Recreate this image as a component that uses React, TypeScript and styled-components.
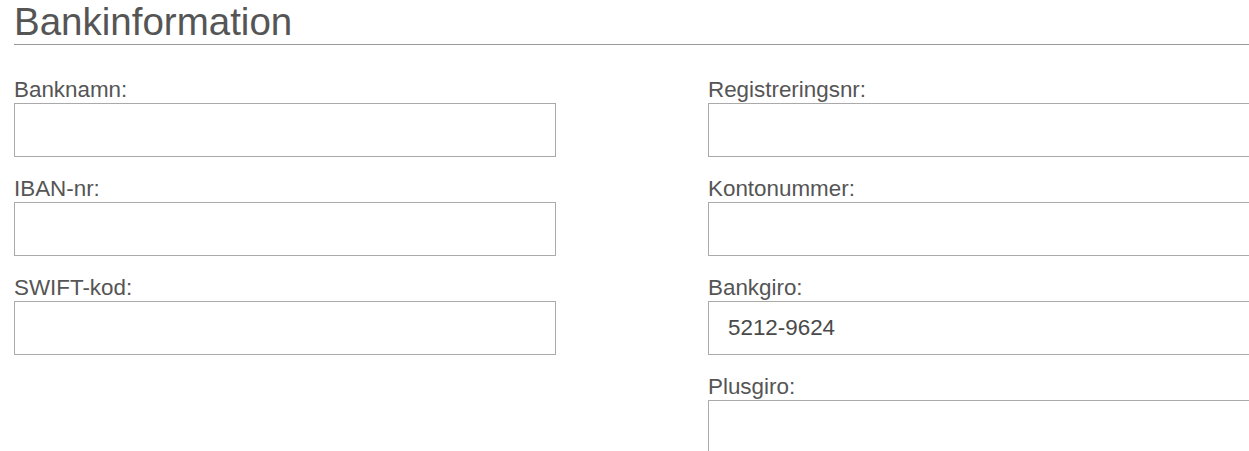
import React from "react";
import styled, { createGlobalStyle } from "styled-components";

const Global = createGlobalStyle`
  html, body {
    margin: 0;
    padding: 0;
    background: #ffffff;
    overflow: hidden;
  }
  body {
    font-family: "Liberation Sans", Arial, sans-serif;
    color: #555555;
  }
`;

const Page = styled.div`
  width: 1236px;
  padding: 0 0 0 14px;
`;

const Heading = styled.h2`
  margin: 0;
  font-size: 38.5px;
  font-weight: 400;
  line-height: 43px;
  padding-bottom: 1px;
  color: #555555;
  border-bottom: 1px solid #999999;
`;

const Columns = styled.div`
  display: grid;
  grid-template-columns: 542px 542px;
  column-gap: 152px;
  padding-top: 31px;
`;

const Column = styled.div`
  display: flex;
  flex-direction: column;
  gap: 18px;
`;

const Field = styled.div`
  display: flex;
  flex-direction: column;
`;

const Label = styled.label`
  display: block;
  font-size: 22.4px;
  line-height: 27px;
  color: #555555;
`;

const Input = styled.input`
  box-sizing: border-box;
  width: 100%;
  height: 54px;
  margin: 0;
  padding: 0 19px;
  border: 1px solid #aaaaaa;
  border-radius: 0;
  background: #ffffff;
  font-family: "Liberation Sans", Arial, sans-serif;
  font-size: 22.4px;
  color: #4a4a4a;
  outline: none;
`;

type FieldDef = { label: string; value?: string };

const left: FieldDef[] = [
  { label: "Banknamn:" },
  { label: "IBAN-nr:" },
  { label: "SWIFT-kod:" },
];

const right: FieldDef[] = [
  { label: "Registreringsnr:" },
  { label: "Kontonummer:" },
  { label: "Bankgiro:", value: "5212-9624" },
  { label: "Plusgiro:" },
];

function FormField({ label, value }: FieldDef) {
  return (
    <Field>
      <Label>{label}</Label>
      <Input type="text" defaultValue={value ?? ""} />
    </Field>
  );
}

export default function App() {
  return (
    <>
      <Global />
      <Page>
        <Heading>Bankinformation</Heading>
        <Columns>
          <Column>
            {left.map((f) => (
              <FormField key={f.label} {...f} />
            ))}
          </Column>
          <Column>
            {right.map((f) => (
              <FormField key={f.label} {...f} />
            ))}
          </Column>
        </Columns>
      </Page>
    </>
  );
}
